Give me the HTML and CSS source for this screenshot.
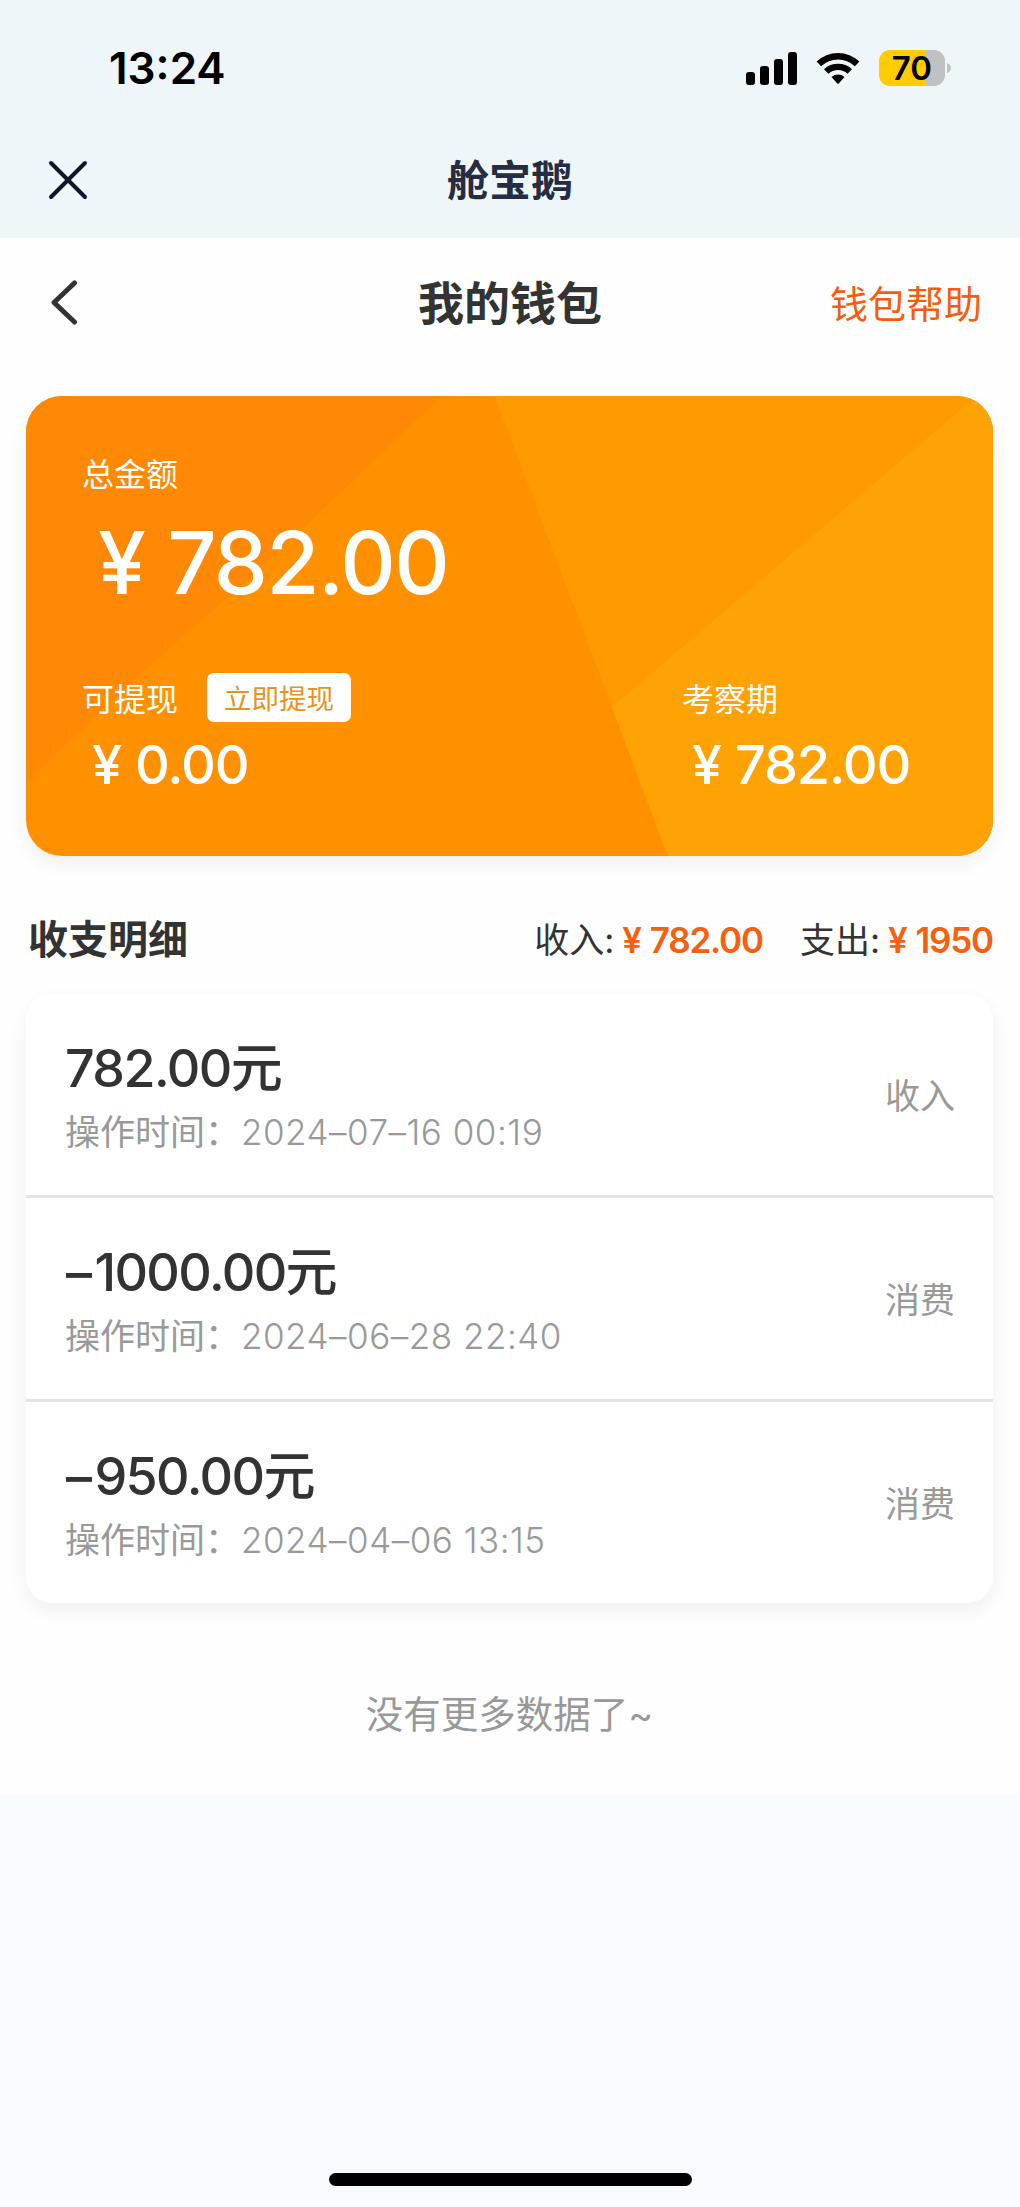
FILE: index.html
```html
<!DOCTYPE html>
<html lang="zh-CN">
<head>
  <meta charset="UTF-8" />
  <meta name="viewport" content="width=device-width, initial-scale=1" />
  <title>我的钱包</title>
  <link rel="stylesheet" href="styles.css">
</head>
<body>

  <header class="top">
    <div class="status-bar">
      <span class="time">13:24</span>
      <div class="status-icons">
        <svg class="signal" width="51" height="33" viewBox="0 0 51 33">
          <rect x="0" y="20" width="9" height="13" rx="3" />
          <rect x="14" y="14" width="9" height="19" rx="3" />
          <rect x="28" y="7" width="9" height="26" rx="3" />
          <rect x="42" y="0" width="9" height="33" rx="3" />
        </svg>
        <svg class="wifi" width="44" height="33" viewBox="0 0 44 33">
          <path d="M0.6 9.6A31 31 0 0 1 43.4 9.6L38.9 14.2A24.6 24.6 0 0 0 5.1 14.2Z" />
          <path d="M8 17.2A20.5 20.5 0 0 1 36 17.2L31.5 21.8A14 14 0 0 0 12.5 21.8Z" />
          <path d="M15.5 25A10 10 0 0 1 28.5 25L22.7 31.6Q22 32.4 21.3 31.6Z" />
        </svg>
        <div class="battery">
          <div class="battery-body"><span>70</span></div>
          <svg class="battery-cap" width="4" height="10" viewBox="0 0 4 10"><path d="M0 0Q4 1.5 4 5T0 10Z" /></svg>
        </div>
      </div>
    </div>
    <div class="app-bar">
      <svg class="close" width="40" height="40" viewBox="0 0 40 40"><path d="M3 3L37 37M37 3L3 37" /></svg>
      <span class="app-name">舱宝鹅</span>
    </div>
  </header>

  <main class="page">
    <nav class="nav">
      <svg class="back" width="28" height="46" viewBox="0 0 28 46"><path d="M24.5 4L4 23.5L24.5 43" /></svg>
      <h1>我的钱包</h1>
      <a class="help">钱包帮助</a>
    </nav>

    <section class="wallet">
      <!-- 卡片背景 -->
      <svg class="wallet-bg" viewBox="0 0 967 461" preserveAspectRatio="none">
        <rect width="967" height="461" fill="#ff9100" />
        <path d="M0 0H416Q340 73 274 135T117 276Q60 330 0 388Z" fill="#ff8804" />
        <path d="M469 0H967V461H642Z" fill="#ff9b00" />
        <path d="M967 -14L586 312L642 461H967Z" fill="#ffa203" />
      </svg>
      <div class="total">
        <div class="label">总金额</div>
        <div class="sum sum-big"><i>¥</i>782.00</div>
      </div>
      <div class="parts">
        <div class="part">
          <div class="label">可提现 <button class="withdraw">立即提现</button></div>
          <div class="sum"><i>¥</i>0.00</div>
        </div>
        <div class="part part-right">
          <div class="label">考察期</div>
          <div class="sum"><i>¥</i>782.00</div>
        </div>
      </div>
    </section>

    <div class="summary">
      <h2>收支明细</h2>
      <div class="summary-item">收入:<b><i>¥</i>782.00</b></div>
      <div class="summary-item">支出:<b><i>¥</i>1950</b></div>
    </div>

    <section class="list">
      <div class="row">
        <div class="info">
          <div class="amount">782.00元</div>
          <div class="date">操作时间：<span>2024–07–16 00:19</span></div>
        </div>
        <div class="type">收入</div>
      </div>
      <div class="row">
        <div class="info">
          <div class="amount"><i>–</i>1000.00元</div>
          <div class="date">操作时间：<span>2024–06–28 22:40</span></div>
        </div>
        <div class="type">消费</div>
      </div>
      <div class="row">
        <div class="info">
          <div class="amount"><i>–</i>950.00元</div>
          <div class="date">操作时间：<span>2024–04–06 13:15</span></div>
        </div>
        <div class="type">消费</div>
      </div>
    </section>

    <p class="no-more">没有更多数据了~</p>
  </main>

  <div class="home-indicator"></div>

</body>
</html>
```

FILE: styles.css
```css
* {
  box-sizing: border-box;
}

body {
  margin: 0;
  min-height: 2207px;
  display: flex;
  flex-direction: column;
  font-family: Inter, "Noto Sans CJK SC", sans-serif;
  background-color: #f8fbff;
  color: #333;
}

i {
  font-style: normal;
}

/* 顶部 */
.top {
  height: 238px;
  background: #eef6f9;
}

.status-bar {
  height: 136px;
  padding: 0 69px 0 109px;
  display: flex;
  justify-content: space-between;
  align-items: center;
}

.time {
  font-size: 44px;
  font-weight: 600;
  color: #000;
}

.status-icons {
  display: flex;
  align-items: center;
  gap: 19px;
}

.battery {
  display: flex;
  align-items: center;
  gap: 2px;
}

.battery-body {
  width: 66px;
  height: 36px;
  border-radius: 11px;
  background: linear-gradient(to right, #ffcc00 71%, #bfc1c4 71%);
  color: #000;
  font-size: 33px;
  font-weight: 600;
  line-height: 36px;
  text-align: center;
}

.battery-cap {
  fill: #bfc1c4;
}

.app-bar {
  height: 88px;
  padding: 0 48px;
  display: grid;
  grid-template-columns: 40px 1fr 40px;
  align-items: center;
}

.close {
  stroke: #11152a;
  stroke-width: 4;
  stroke-linecap: round;
}

.app-name {
  padding-top: 2px;
  text-align: center;
  font-size: 42px;
  line-height: 60px;
  font-weight: 700;
  color: #262c42;
}

/* 页面 */
.page {
  height: 1557px;
  padding: 0 27px 0 26px;
  background: #fefefe;
}

.nav {
  height: 158px;
  padding: 0 11px 30px 24px;
  display: grid;
  grid-template-columns: 140px 1fr 152px;
  align-items: center;
}

.back {
  fill: none;
  stroke: #333;
  stroke-width: 5;
  stroke-linecap: round;
  stroke-linejoin: round;
}

.nav h1 {
  margin: 0;
  padding-top: 2px;
  font-size: 46px;
  line-height: 60px;
  font-weight: 700;
  text-align: center;
}

.help {
  padding-top: 3px;
  font-size: 38px;
  line-height: 56px;
  color: #f95a0c;
}

/* 钱包卡片 */
.wallet {
  position: relative;
  height: 460px;
  padding: 52px 56px 0;
  border-radius: 36px;
  overflow: hidden;
  color: #fff;
  box-shadow: 0 8px 20px rgba(0, 0, 30, 0.06);
}

.wallet-bg {
  position: absolute;
  left: 0;
  top: 0;
  width: 100%;
  height: 100%;
}

.total,
.parts {
  position: relative;
}

.label {
  height: 48px;
  display: flex;
  align-items: center;
  font-size: 32px;
}

.sum {
  padding-left: 10px;
  height: 87px;
  line-height: 87px;
  font-size: 54px;
  font-weight: 500;
  letter-spacing: -1.1px;
}

.sum i {
  margin-right: 14px;
}

.sum-big {
  margin-top: 3px;
  padding-left: 16px;
  height: 128px;
  line-height: 128px;
  font-size: 86px;
  letter-spacing: -1.5px;
}

.sum-big i {
  margin-right: 23px;
}

.parts {
  margin-top: 46px;
  display: flex;
}

.part {
  width: 600px;
}

.part-right {
  width: auto;
}

.withdraw {
  margin-left: 29px;
  width: 144px;
  height: 49px;
  padding: 0;
  border: none;
  border-radius: 7px;
  background: #fff;
  color: #e8931c;
  font-family: inherit;
  font-size: 27.5px;
}

/* 收支汇总 */
.summary {
  height: 138px;
  padding: 56px 0 0 2px;
  display: flex;
  align-items: flex-start;
  line-height: 56px;
}

.summary h2 {
  margin: 0 auto 0 0;
  font-size: 40px;
  font-weight: 700;
}

.summary-item {
  margin-left: 37px;
  font-size: 35px;
}

.summary-item b {
  margin-left: 8px;
  font-weight: 600;
  letter-spacing: -1.2px;
  color: #f6600f;
}

.summary-item i {
  margin-right: 9px;
}

/* 明细列表 */
.list {
  height: 609px;
  border-radius: 26px;
  background: #fff;
  box-shadow: 0 8px 20px rgba(0, 0, 0, 0.06);
}

.row {
  height: 204px;
  padding: 0 38px 0 39px;
  display: flex;
  justify-content: space-between;
  align-items: center;
  border-bottom: 3px solid #e4e4e4;
}

.row:last-child {
  height: 201px;
  border-bottom: none;
}

.info {
  padding-top: 8px;
}

.amount {
  font-size: 52px;
  font-weight: 500;
  line-height: 66px;
  letter-spacing: -1.6px;
}

.amount i {
  margin: 0 4px 0 1px;
}

.date {
  font-size: 35px;
  line-height: 60px;
  color: #999;
}

.date span {
  margin-left: 1px;
  font-weight: 300;
  letter-spacing: 0.5px;
}

.type {
  padding-bottom: 2px;
  font-size: 35px;
  color: #999;
}

.no-more {
  margin: 84px 0 0;
  font-size: 37.5px;
  line-height: 56px;
  text-align: center;
  color: #999;
}

.home-indicator {
  width: 363px;
  height: 13px;
  margin: auto auto 21px;
  border-radius: 7px;
  background: #000;
}
```
